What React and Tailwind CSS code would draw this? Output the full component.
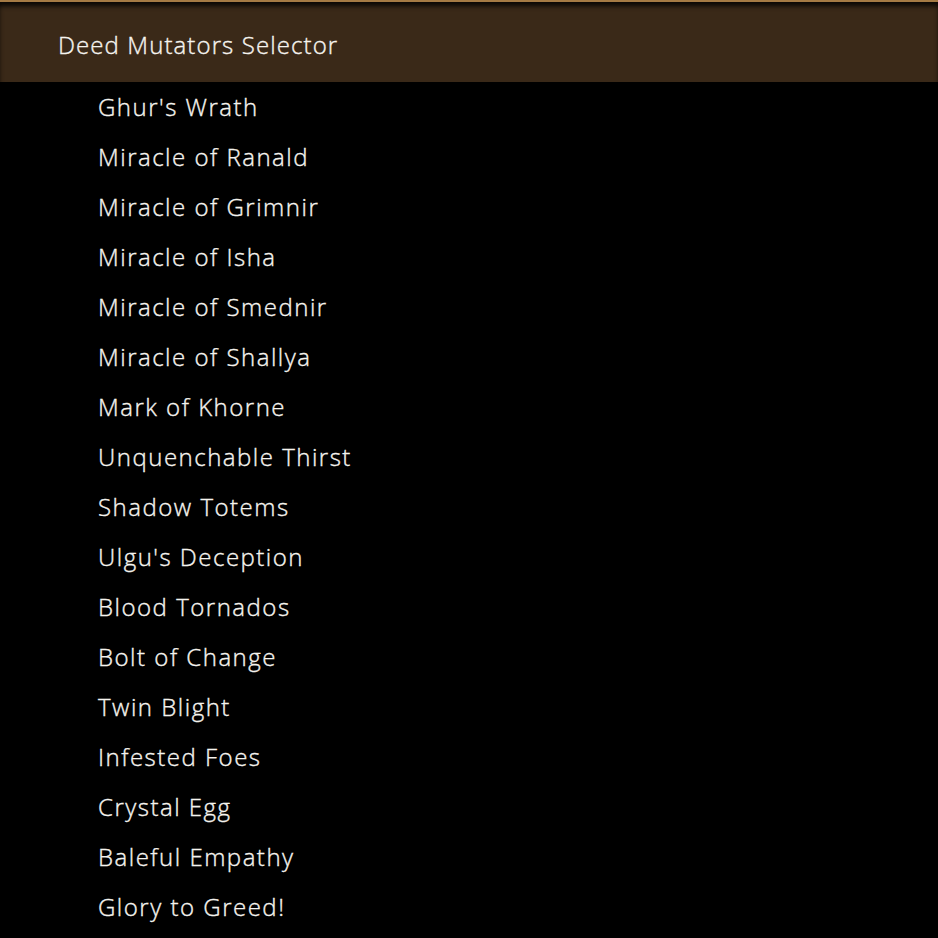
export default function App() {
  const items = [
    "Ghur's Wrath",
    "Miracle of Ranald",
    "Miracle of Grimnir",
    "Miracle of Isha",
    "Miracle of Smednir",
    "Miracle of Shallya",
    "Mark of Khorne",
    "Unquenchable Thirst",
    "Shadow Totems",
    "Ulgu's Deception",
    "Blood Tornados",
    "Bolt of Change",
    "Twin Blight",
    "Infested Foes",
    "Crystal Egg",
    "Baleful Empathy",
    "Glory to Greed!",
  ];
  return (
    <div className="w-[938px] h-[938px] bg-black overflow-hidden" style={{ fontFamily: "'Open Sans', 'Noto Sans', sans-serif" }}>
      <div className="h-[82px] bg-[#3a2918] border-t-2 border-[#a47a44] shadow-[inset_0_5px_5px_-1px_rgba(0,0,0,0.85)] flex items-center pl-[58px]">
        <span className="text-[#f6f4ef] text-[24px] font-light [-webkit-text-stroke:0.35px_#f6f4ef] tracking-[1.1px] leading-none pt-[6px]">Deed Mutators Selector</span>
      </div>
      <ul className="flex flex-col">
        {items.map((t) => (
          <li key={t} className="h-[50px] flex items-center pl-[98px] text-[#f6f4ef] text-[24px] font-light [-webkit-text-stroke:0.35px_#f6f4ef] tracking-[1.5px] leading-none">
            {t}
          </li>
        ))}
      </ul>
    </div>
  );
}
